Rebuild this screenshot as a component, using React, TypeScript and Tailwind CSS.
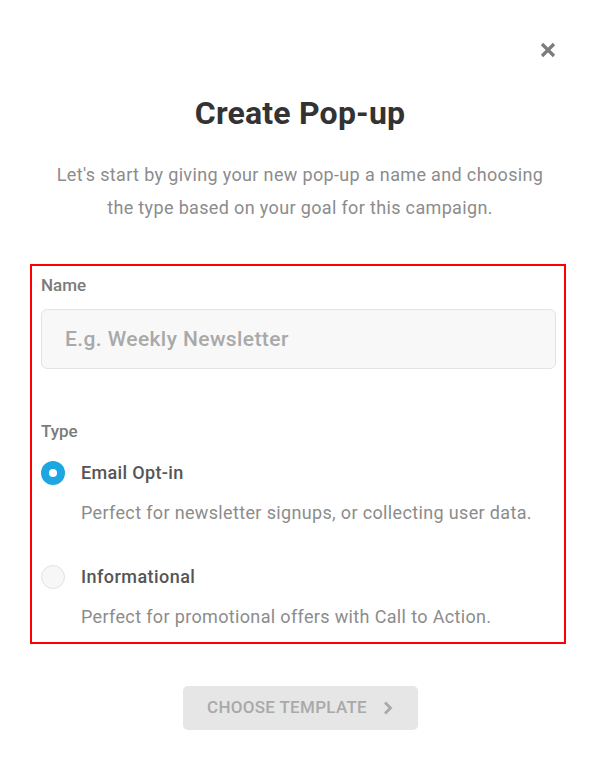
export default function App() {
  return (
    <div className="w-[600px] min-h-[773px] bg-white font-[Roboto,'Liberation_Sans',sans-serif]">
      <div className="flex justify-end pt-[42px] pr-[44px]">
        <button className="w-4 h-4 flex items-center justify-center text-[#7c7c7c]">
          <svg width="16" height="16" viewBox="0 0 16 16">
            <path
              d="M2 2 L14 14 M14 2 L2 14"
              stroke="currentColor"
              strokeWidth="3.2"
              strokeLinecap="butt"
            />
          </svg>
        </button>
      </div>

      <h1 className="mt-[35px] text-center text-[32px] leading-[40px] font-bold tracking-[0.2px] text-[#333]">
        Create Pop-up
      </h1>
      <p className="mt-[25px] mx-auto w-[500px] text-center text-[18px] leading-[33px] tracking-[0.35px] text-[#8c8c8c]">
        Let's start by giving your new pop-up a name and choosing the type
        based on your goal for this campaign.
      </p>

      <div className="mt-[40px] ml-[30px] mr-[34px] border-2 border-[#ff0000] pl-[9px] pr-[8px] pt-[9px] pb-[13px]">
        <div className="text-[17px] leading-[20px] font-medium text-[#7b7b7b]">
          Name
        </div>
        <input
          className="mt-[14px] block w-full h-[60px] rounded-[6px] border border-[#e3e3e3] bg-[#f8f8f8] px-[23px] text-[21px] font-medium tracking-[0.4px] text-[#555] placeholder:text-[#a9a9a9] outline-none"
          placeholder="E.g. Weekly Newsletter"
        />

        <div className="mt-[52px] text-[17px] leading-[20px] font-medium text-[#7b7b7b]">
          Type
        </div>

        <div className="mt-[20px] flex items-center gap-4 h-6">
          <span className="w-6 h-6 rounded-full bg-[#1ca6e2] flex items-center justify-center">
            <span className="w-2 h-2 rounded-full bg-white" />
          </span>
          <span className="text-[18px] leading-6 font-medium tracking-[0.35px] text-[#555]">
            Email Opt-in
          </span>
        </div>
        <p className="mt-4 ml-10 text-[18px] leading-6 tracking-[0.35px] text-[#8c8c8c]">
          Perfect for newsletter signups, or collecting user data.
        </p>

        <div className="mt-10 flex items-center gap-4 h-6">
          <span className="w-6 h-6 rounded-full bg-[#f7f7f7] border border-[#e2e2e2]" />
          <span className="text-[18px] leading-6 font-medium tracking-[0.45px] text-[#555]">
            Informational
          </span>
        </div>
        <p className="mt-4 ml-10 text-[18px] leading-6 tracking-[0.35px] text-[#8c8c8c]">
          Perfect for promotional offers with Call to Action.
        </p>
      </div>

      <div className="mt-[42px] flex justify-center">
        <button className="w-[235px] h-[44px] rounded-[5px] bg-[#e6e6e6] flex items-center justify-center gap-4 text-[17px] font-medium tracking-[0.3px] text-[#a9a9a9]">
          CHOOSE TEMPLATE
          <svg width="10" height="16" viewBox="0 0 10 16">
            <path
              d="M2 2.5 L7.5 8 L2 13.5"
              fill="none"
              stroke="currentColor"
              strokeWidth="2.8"
            />
          </svg>
        </button>
      </div>
    </div>
  );
}
